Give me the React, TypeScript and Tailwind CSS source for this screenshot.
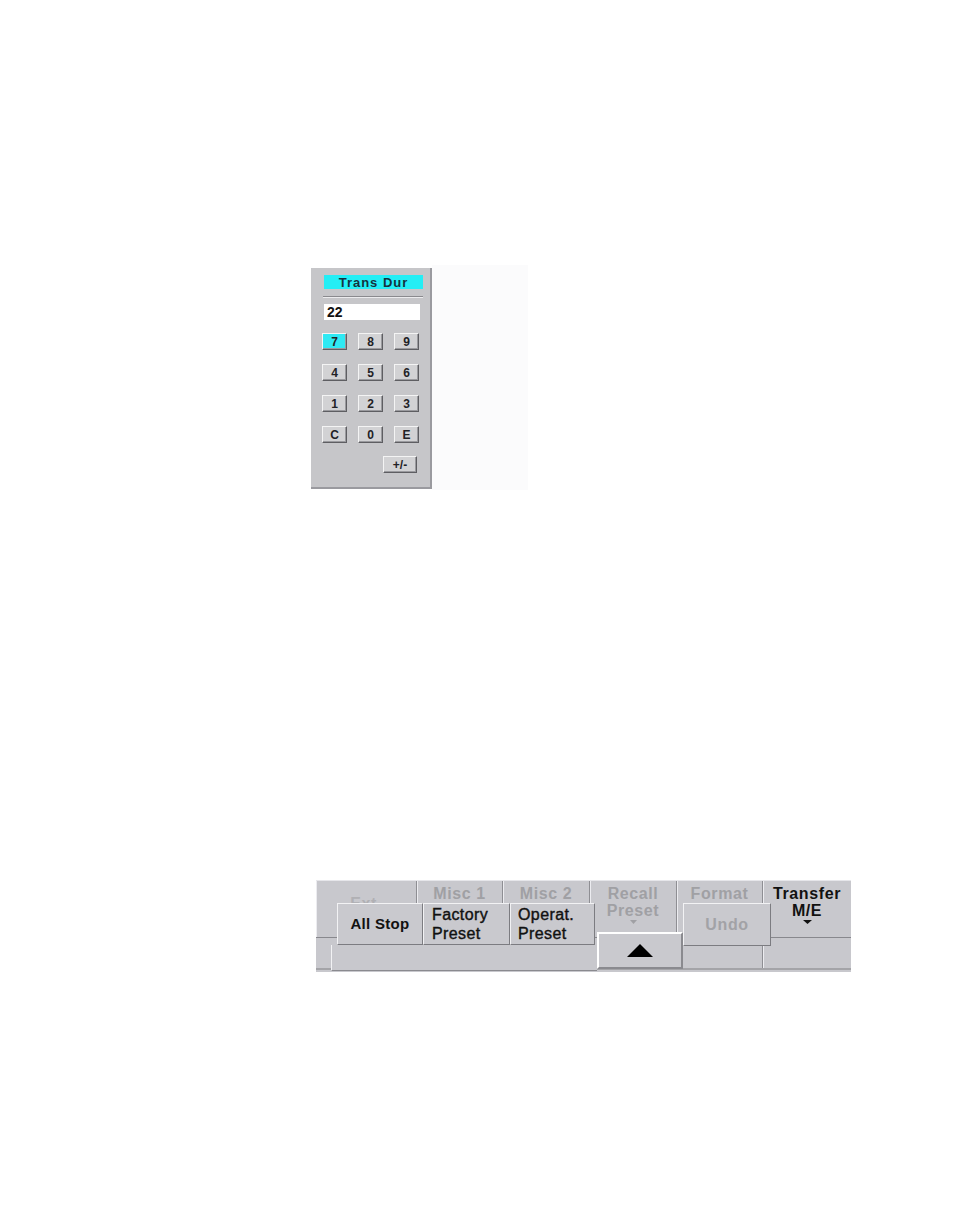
import React from "react";

const SANS = "font-['Liberation_Sans',Arial,sans-serif]";

function Key({ label, active = false, wide = false }: { label: string; active?: boolean; wide?: boolean }) {
  return (
    <div
      className={`flex items-center justify-center h-[17px] ${wide ? "w-[34px]" : "w-[25px]"} ${
        active ? "bg-[#2fe9f3]" : "bg-[#d2d2d4]"
      } border border-t-[#f4f4f4] border-l-[#f4f4f4] border-r-[#5e5e62] border-b-[#5e5e62] shadow-[inset_-1px_-1px_0_#9a9a9e] text-[12px] font-bold leading-none text-[#222226]`}
    >
      {label}
    </div>
  );
}

function Keypad() {
  const keys = ["7", "8", "9", "4", "5", "6", "1", "2", "3", "C", "0", "E"];
  return (
    <div className="mt-[3px] w-[121px] h-[221px] bg-[#c6c6c9] border-r-2 border-b-2 border-r-[#9a9a9f] border-b-[#9a9a9f] flex flex-col">
      <div className="ml-[13px] mt-[7px] w-[99px] h-[14px] bg-[#24eef5] flex items-center justify-center text-[13px] font-bold tracking-[1px] leading-none text-[#14323f]">
        Trans Dur
      </div>
      <div className="ml-[12px] mt-[7px] w-[100px] h-[2px] border-t border-t-[#8a8a8e] border-b border-b-[#ececee]" />
      <div className="ml-[13px] mt-[6px] w-[96px] h-[16px] bg-white flex items-center pl-[3px] text-[14px] font-bold leading-none text-[#111]">
        22
      </div>
      <div className="ml-[11px] mt-[13px] grid grid-cols-[25px_25px_25px] auto-rows-[17px] gap-x-[11px] gap-y-[14px]">
        {keys.map((k) => (
          <Key key={k} label={k} active={k === "7"} />
        ))}
      </div>
      <div className="ml-[72px] mt-[13px]">
        <Key label="+/-" wide />
      </div>
    </div>
  );
}

function Arrow({ color, w }: { color: string; w: number }) {
  return (
    <svg width={w} height={4} viewBox={`0 0 ${w} 4`} className="block mx-auto">
      <polygon points={`0,0 ${w},0 ${w / 2},4`} fill={color} />
    </svg>
  );
}

function TopCell({ w, children, last = false }: { w: string; children?: React.ReactNode; last?: boolean }) {
  return (
    <div
      className={`${w} h-full pt-[4px] flex flex-col items-center text-[16px] leading-[17px] font-bold tracking-[0.6px] ${
        last ? "" : "border-r border-r-[#8e8e93]"
      } shadow-[inset_1px_0_0_#ececf0]`}
    >
      {children}
    </div>
  );
}

function TabBar() {
  return (
    <div className="relative ml-[316px] mt-[390px] w-[535px] h-[92px] bg-[#c8c8cd] border-t border-t-[#e6e6ea]">
      {/* tab labels */}
      <div className="flex h-[57px] border-b border-b-[#88888d]">
        <TopCell w="w-[101px]">
          <span className="text-[#b0b0b4] mt-[10px]">Ext.</span>
        </TopCell>
        <TopCell w="w-[86px]">
          <span className="text-[#a0a0a4]">Misc 1</span>
        </TopCell>
        <TopCell w="w-[87px]">
          <span className="text-[#a0a0a4]">Misc 2</span>
        </TopCell>
        <TopCell w="w-[87px]">
          <span className="text-[#a0a0a4]">Recall</span>
          <span className="text-[#a0a0a4]">Preset</span>
          <div className="mt-[1px]">
            <Arrow color="#a0a0a4" w={7} />
          </div>
        </TopCell>
        <TopCell w="w-[86px]">
          <span className="text-[#a0a0a4]">Format</span>
        </TopCell>
        <TopCell w="w-[88px]" last>
          <span className="text-[#111]">Transfer</span>
          <span className="text-[#111]">M/E</span>
          <div className="mt-[1px]">
            <Arrow color="#111" w={9} />
          </div>
        </TopCell>
      </div>
      {/* lower row */}
      <div className="flex h-[32px] border-b-2 border-b-[#a4a4a8]">
        <div className="w-[101px] border-r border-r-[#8e8e93]" />
        <div className="w-[86px] border-r border-r-[#8e8e93]" />
        <div className="w-[87px] border-r border-r-[#8e8e93]" />
        <div className="w-[87px] border-r border-r-[#8e8e93]" />
        <div className="w-[86px] border-r border-r-[#8e8e93] shadow-[inset_1px_0_0_#ececf0]" />
        <div className="w-[88px] shadow-[inset_1px_0_0_#ececf0]" />
      </div>

      {/* pop-up menu over the tabs */}
      <div className="absolute left-[15px] top-[64px] w-[266px] h-[26px] bg-[#c8c8cd] border-l border-l-[#f2f2f4] border-b border-b-[#8a8a8f]" />
      <div className="absolute left-[21px] top-[22px] flex h-[42px]">
        <div className="w-[86px] h-full flex items-center justify-center bg-[#c9c9ce] border border-t-[#f2f2f4] border-l-[#f2f2f4] border-r-[#7c7c81] border-b-[#7c7c81] text-[15px] font-bold tracking-[0.3px] text-[#111]">
          All Stop
        </div>
        <div className="w-[87px] h-full flex flex-col justify-center pl-[8px] bg-[#c9c9ce] border border-t-[#f2f2f4] border-l-[#f2f2f4] border-r-[#7c7c81] border-b-[#7c7c81] text-[16px] leading-[19px] tracking-[0.4px] [-webkit-text-stroke:0.4px_#111] text-[#111]">
          <span>Factory</span>
          <span>Preset</span>
        </div>
        <div className="w-[85px] h-full flex flex-col justify-center pl-[7px] bg-[#c9c9ce] border border-t-[#f2f2f4] border-l-[#f2f2f4] border-r-[#7c7c81] border-b-[#7c7c81] text-[16px] leading-[19px] tracking-[0.4px] [-webkit-text-stroke:0.4px_#111] text-[#111]">
          <span>Operat.</span>
          <span>Preset</span>
        </div>
      </div>
      <div className="absolute left-[281px] top-[51px] w-[86px] h-[37px] flex items-center justify-center bg-[#c9c9ce] border-2 border-t-white border-l-white border-r-[#8a8a8f] border-b-[#8a8a8f]">
        <svg width="26" height="13" viewBox="0 0 26 13">
          <polygon points="13,0 26,13 0,13" fill="#000" />
        </svg>
      </div>
      <div className="absolute left-[367px] top-[22px] w-[88px] h-[43px] flex items-center justify-center bg-[#c9c9ce] border border-t-[#f2f2f4] border-l-[#f2f2f4] border-r-[#7c7c81] border-b-[#7c7c81] text-[16px] font-bold tracking-[0.6px] text-[#a2a2a6]">
        Undo
      </div>
    </div>
  );
}

export default function App() {
  return (
    <div className={`w-[954px] h-[1227px] bg-white ${SANS}`}>
      <div className="pt-[265px] pl-[311px] flex items-start">
        <Keypad />
        <div className="w-[96px] h-[225px] bg-[#fbfbfc]" />
      </div>
      <TabBar />
    </div>
  );
}
